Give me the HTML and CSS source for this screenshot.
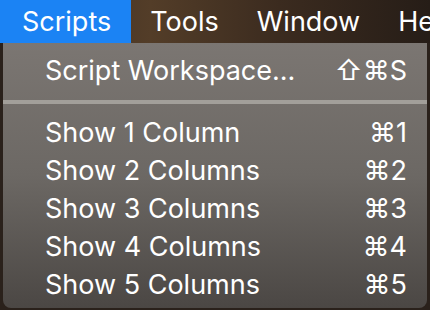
FILE: index.html
```html
<!DOCTYPE html>
<html lang="en">
<head>
    <meta charset="UTF-8">
    <meta name="viewport" content="width=device-width, initial-scale=1.0">
    <title>Scripts Menu</title>
    <link rel="stylesheet" href="styles.css">
</head>
<body>
    <div class="menubar">
        <div class="menubar-item active">Scripts</div>
        <div class="menubar-item">Tools</div>
        <div class="menubar-item">Window</div>
        <div class="menubar-item">Help</div>
    </div>
    <div class="menu">
        <div class="menu-item">
            <span class="label">Script Workspace...</span>
            <span class="shortcut">⇧⌘S</span>
        </div>
        <div class="separator"></div>
        <div class="menu-item">
            <span class="label">Show 1 Column</span>
            <span class="shortcut">⌘1</span>
        </div>
        <div class="menu-item">
            <span class="label">Show 2 Columns</span>
            <span class="shortcut">⌘2</span>
        </div>
        <div class="menu-item">
            <span class="label">Show 3 Columns</span>
            <span class="shortcut">⌘3</span>
        </div>
        <div class="menu-item">
            <span class="label">Show 4 Columns</span>
            <span class="shortcut">⌘4</span>
        </div>
        <div class="menu-item">
            <span class="label">Show 5 Columns</span>
            <span class="shortcut">⌘5</span>
        </div>
    </div>
</body>
</html>
```

FILE: styles.css
```css
body {
    margin: 0;
    width: 430px;
    height: 310px;
    overflow: hidden;
    background-color: #2a211b;
    font-family: Inter, "Liberation Sans", sans-serif;
    color: white;
}
.menubar {
    display: flex;
    height: 43px;
    white-space: nowrap;
    background: linear-gradient(90deg, #3a2a1c 0%, #533d28 35%, #3b2b1f 65%, #261d17 100%);
}
.menubar-item {
    padding: 0 19px;
    font-size: 27px;
    line-height: 43px;
}
.menubar-item.active {
    padding-left: 22px;
    padding-right: 20px;
    background-color: #1b83f4;
}
.menu {
    margin: 0 3px;
    height: 257px;
    padding-top: 8px;
    border-radius: 0 0 8px 8px;
    background: linear-gradient(180deg, #7b7672 0%, #6c6864 50%, #4b4744 100%);
}
.menu-item {
    display: flex;
    justify-content: space-between;
    align-items: center;
    height: 38px;
    padding: 0 20px 0 42px;
    font-size: 27px;
}
.separator {
    height: 4px;
    margin: 11px 0 9px;
    background-color: #a29f9a;
}
```
